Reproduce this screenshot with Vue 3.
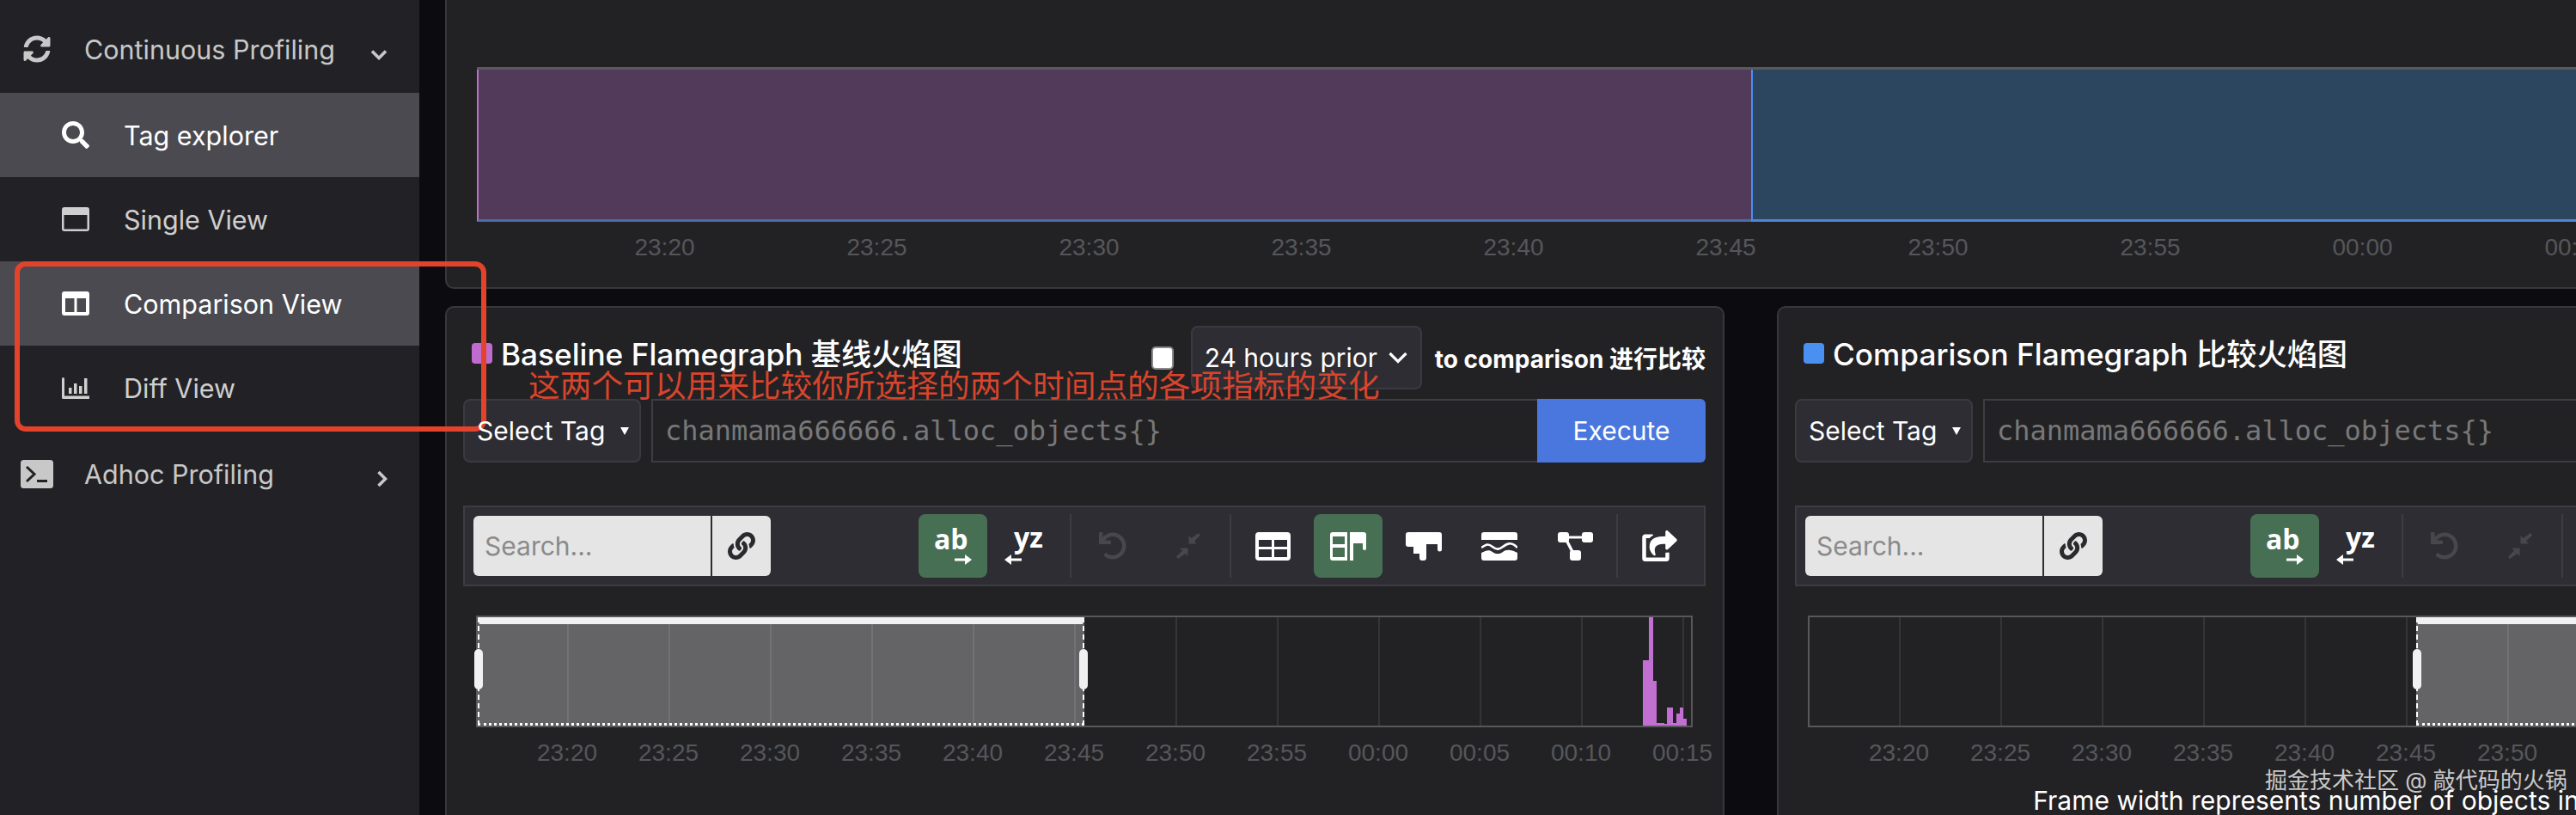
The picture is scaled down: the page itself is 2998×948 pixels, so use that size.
<script setup>
const navItems = [
  { label: 'Continuous Profiling', icon: 'sync', parent: true, caret: 'down' },
  { label: 'Tag explorer', icon: 'search', active: true },
  { label: 'Single View', icon: 'window' },
  { label: 'Comparison View', icon: 'columns', active: true },
  { label: 'Diff View', icon: 'chart' },
  { label: 'Adhoc Profiling', icon: 'terminal', parent: true, caret: 'right' },
];

const topTicks = ['23:20', '23:25', '23:30', '23:35', '23:40', '23:45', '23:50', '23:55', '00:00', '00:05'];
const ticks = ['23:20', '23:25', '23:30', '23:35', '23:40', '23:45', '23:50', '23:55', '00:00', '00:05', '00:10', '00:15'];

// x positions are measured from the inner left edge of the chart
const bars = [
  { x: 1356, w: 7, h: 76 },
  { x: 1363, w: 5, h: 126 },
  { x: 1368, w: 4, h: 52 },
  { x: 1372, w: 9, h: 3 },
  { x: 1381, w: 3, h: 2 },
  { x: 1384, w: 7, h: 21 },
  { x: 1391, w: 4, h: 3 },
  { x: 1395, w: 4, h: 14 },
  { x: 1399, w: 4, h: 21 },
  { x: 1403, w: 4, h: 8 },
];

const panels = [
  {
    title: 'Baseline Flamegraph 基线火焰图',
    color: '#c06bd0',
    selection: { left: 0, width: 706 },
    bars,
    controls: true,
    annotated: true,
  },
  {
    title: 'Comparison Flamegraph 比较火焰图',
    color: '#4a90f0',
    selection: { left: 706, width: 706 },
    bars: [],
    caption: 'Frame width represents number of objects in RAM per function',
  },
];
</script>

<template>
  <div class="page">
    <aside class="sidebar">
      <div
        v-for="item in navItems"
        :key="item.label"
        class="nav-row"
        :class="{ parent: item.parent, active: item.active }"
      >
        <span class="nav-icon">
          <svg v-if="item.icon === 'sync'" width="32" height="32" viewBox="0 0 512 512" fill="currentColor"><path d="M370.72 133.28C339.458 104.008 298.888 87.962 255.848 88c-77.458.068-144.328 53.178-162.791 126.85-1.344 5.363-6.122 9.15-11.651 9.15H24.103c-7.498 0-13.194-6.807-11.807-14.176C33.933 94.924 134.813 8 256 8c66.448 0 126.791 26.136 171.315 68.685L463.03 40.97C478.149 25.851 504 36.559 504 57.941V192c0 13.255-10.745 24-24 24H345.941c-21.382 0-32.09-25.851-16.971-40.971l41.75-41.749zM32 296h134.059c21.382 0 32.09 25.851 16.971 40.971l-41.75 41.75c31.262 29.273 71.835 45.319 114.876 45.28 77.418-.07 144.315-53.144 162.787-126.849 1.344-5.363 6.122-9.15 11.651-9.15h57.304c7.498 0 13.194 6.807 11.807 14.176C478.067 417.076 377.187 504 256 504c-66.448 0-126.791-26.136-171.315-68.685L48.97 471.03C33.851 486.149 8 475.441 8 454.059V320c0-13.255 10.745-24 24-24z"/></svg>
          <svg v-else-if="item.icon === 'search'" width="32" height="32" viewBox="0 0 512 512" fill="currentColor"><path d="M505 442.7L405.3 343c-4.5-4.5-10.6-7-17-7H372c27.6-35.3 44-79.7 44-128C416 93.1 322.9 0 208 0S0 93.1 0 208s93.1 208 208 208c48.3 0 92.7-16.4 128-44v16.3c0 6.4 2.5 12.5 7 17l99.7 99.7c9.4 9.4 24.6 9.4 33.9 0l28.3-28.3c9.4-9.4 9.4-24.6.1-34zM208 336c-70.7 0-128-57.2-128-128 0-70.7 57.2-128 128-128 70.7 0 128 57.2 128 128 0 70.7-57.2 128-128 128z"/></svg>
          <svg v-else-if="item.icon === 'window'" width="32" height="28" viewBox="0 0 32 28" fill="currentColor"><path fill-rule="evenodd" d="M3 0h26a3 3 0 0 1 3 3v22a3 3 0 0 1-3 3H3a3 3 0 0 1-3-3V3a3 3 0 0 1 3-3zM2.500 9v16.500h27V9z"/></svg>
          <svg v-else-if="item.icon === 'columns'" width="32" height="28" viewBox="0 0 32 28" fill="currentColor"><path fill-rule="evenodd" d="M3 0h26a3 3 0 0 1 3 3v22a3 3 0 0 1-3 3H3a3 3 0 0 1-3-3V3a3 3 0 0 1 3-3zM4 8v16h10.500V8zM17.500 8v16H28V8z"/></svg>
          <svg v-else-if="item.icon === 'chart'" width="32" height="25" viewBox="0 0 32 25" fill="currentColor"><path d="M0 1.500A1.500 1.500 0 0 1 3 1.500V21.500h29V25H1.500A1.500 1.500 0 0 1 0 23.500z"/><rect x="8" y="12" width="3.500" height="7"/><rect x="14" y="7" width="3.500" height="12"/><rect x="20" y="10" width="3.500" height="9"/><rect x="26" y="1" width="3.500" height="18"/></svg>
          <svg v-else width="38" height="33" viewBox="0 0 38 33"><rect width="38" height="33" rx="3.500" fill="currentColor"/><path d="M7 8l9 8.500-9 8.500" fill="none" stroke="#222226" stroke-width="3"/><rect x="19" y="23" width="12" height="3" fill="#222226"/></svg>
        </span>
        <span class="nav-label">{{ item.label }}</span>
        <svg v-if="item.caret === 'down'" class="caret" width="20" height="13" viewBox="0 0 20 13"><path d="M2 2.500l8 8 8-8" fill="none" stroke="currentColor" stroke-width="3.600"/></svg>
        <svg v-if="item.caret === 'right'" class="caret" width="13" height="20" viewBox="0 0 13 20"><path d="M2.500 2l8 8-8 8" fill="none" stroke="currentColor" stroke-width="3.600"/></svg>
      </div>
    </aside>

    <main class="main">
      <section class="card overview">
        <div class="overview-chart">
          <div class="overview-left"></div>
          <div class="overview-right"></div>
        </div>
        <div class="overview-ticks">
          <span v-for="tick in topTicks" :key="tick" class="overview-tick">{{ tick }}</span>
        </div>
      </section>

      <div class="panels">
        <section v-for="panel in panels" :key="panel.title" class="card panel">
          <div class="panel-head">
            <span class="swatch" :style="{ background: panel.color }"></span>
            <h2 class="panel-title">{{ panel.title }}</h2>
            <div v-if="panel.controls" class="compare-controls">
              <span class="checkbox"></span>
              <span class="prior-select">
                24 hours prior
                <svg width="24" height="14" viewBox="0 0 24 14"><path d="M2.500 2l9.500 9.500L21.500 2" fill="none" stroke="#fff" stroke-width="3.200"/></svg>
              </span>
              <span class="compare-label">to comparison 进行比较</span>
            </div>
          </div>

          <div class="query-row">
            <button class="tag-select">
              <span class="tag-text">Select Tag</span>
              <i class="tag-caret"></i>
            </button>
            <div class="query-input">chanmama666666.alloc_objects{}</div>
            <button class="execute">Execute</button>
          </div>

          <div class="toolbar">
            <div class="search">
              <span class="search-input">Search...</span>
              <span class="search-link">
                <svg width="32" height="32" viewBox="0 0 512 512" fill="#2a2a2e"><path d="M326.612 185.391c59.747 59.809 58.927 155.698.36 214.59-.11.12-.24.25-.36.37l-67.2 67.2c-59.27 59.27-155.699 59.262-214.96 0-59.27-59.26-59.27-155.7 0-214.96l37.106-37.106c9.84-9.84 26.786-3.3 27.294 10.606.648 17.722 3.826 35.527 9.69 52.721 1.986 5.822.567 12.262-3.783 16.612l-13.087 13.087c-28.026 28.026-28.905 73.66-1.155 101.96 28.024 28.579 74.086 28.749 102.325.51l67.2-67.19c28.191-28.191 28.073-73.757 0-101.83-3.701-3.694-7.429-6.564-10.341-8.569a16.037 16.037 0 0 1-6.947-12.606c-.396-10.567 3.348-21.456 11.698-29.806l21.054-21.055c5.521-5.521 14.182-6.199 20.584-1.731a152.482 152.482 0 0 1 20.522 17.197zM467.547 44.449c-59.261-59.262-155.69-59.27-214.96 0l-67.2 67.2c-.12.12-.25.25-.36.37-58.566 58.892-59.387 154.781.36 214.59a152.454 152.454 0 0 0 20.521 17.196c6.402 4.468 15.064 3.789 20.584-1.731l21.054-21.055c8.35-8.35 12.094-19.239 11.698-29.806a16.037 16.037 0 0 0-6.947-12.606c-2.912-2.005-6.64-4.875-10.341-8.569-28.073-28.073-28.191-73.639 0-101.83l67.2-67.19c28.239-28.239 74.3-28.069 102.325.51 27.75 28.3 26.872 73.934-1.155 101.96l-13.087 13.087c-4.35 4.35-5.769 10.79-3.783 16.612 5.864 17.194 9.042 34.999 9.69 52.721.509 13.906 17.454 20.446 27.294 10.606l37.106-37.106c59.271-59.259 59.271-155.699.001-214.959z"/></svg>
              </span>
            </div>

            <button class="tool on">
              <span class="ab-text">ab</span>
              <svg class="ab-arrow" width="20" height="12" viewBox="0 0 20 12" fill="#fff"><path d="M0 4.500h12V0l8 6-8 6V7.500H0z"/></svg>
            </button>
            <button class="tool">
              <span class="yz-text">yz</span>
              <svg class="yz-arrow" width="20" height="12" viewBox="0 0 20 12" fill="#fff"><path d="M20 4.500H8V0L0 6l8 6V7.500h12z"/></svg>
            </button>
            <span class="sep"></span>
            <button class="tool">
              <svg width="32" height="32" viewBox="0 0 512 512" fill="#47474c"><path d="M212.333 224.333H12c-6.627 0-12-5.373-12-12V12C0 5.373 5.373 0 12 0h48c6.627 0 12 5.373 12 12v78.112C117.773 39.279 184.26 7.47 258.175 8.007c136.906.994 246.448 111.623 246.157 248.532C504.041 393.258 393.12 504 256.333 504c-64.089 0-122.496-24.313-166.51-64.215-5.099-4.622-5.334-12.554-.467-17.420l33.967-33.967c4.474-4.474 11.662-4.717 16.401-.525C170.76 415.336 211.58 432 256.333 432c97.268 0 176-78.716 176-176 0-97.267-78.716-176-176-176-58.496 0-110.28 28.476-142.274 72.333h98.274c6.627 0 12 5.373 12 12v48c0 6.627-5.373 12-12 12z"/></svg>
            </button>
            <button class="tool">
              <svg width="28" height="30" viewBox="0 0 28 30" fill="#47474c"><path d="M26 0l2 2.500-7 7 3 3h-9.500V3l3 3zM2 30l-2-2.500 7-7-3-3h9.500V27l-3-3z"/></svg>
            </button>
            <span class="sep"></span>
            <button class="tool">
              <svg width="41" height="33" viewBox="0 0 41 33" fill="#fff"><path fill-rule="evenodd" d="M4 0h33a4 4 0 0 1 4 4v25a4 4 0 0 1-4 4H4a4 4 0 0 1-4-4V4a4 4 0 0 1 4-4zM4 9v8h15V9zM22 9v8h15V9zM4 20v9h15v-9zM22 20v9h15v-9z"/></svg>
            </button>
            <button class="tool on">
              <svg width="42" height="33" viewBox="0 0 42 33" fill="#fff"><path fill-rule="evenodd" d="M3 0h17v33H3a3 3 0 0 1-3-3V3a3 3 0 0 1 3-3zM3 5v9h14V5zM3 18v11h14V18z"/><path d="M23 0h16a3 3 0 0 1 3 3v16a2 2 0 0 1-4 0v-6H27v20h-4z"/></svg>
            </button>
            <button class="tool">
              <svg width="42" height="33" viewBox="0 0 42 33" fill="#fff"><path d="M3 0h36a3 3 0 0 1 3 3v17a2.500 2.500 0 0 1-5 0v-6H24v16a3 3 0 0 1-3 3h-2a3 3 0 0 1-3-3v-5H9v-8H3a3 3 0 0 1-3-3V3a3 3 0 0 1 3-3z"/></svg>
            </button>
            <button class="tool">
              <svg width="42" height="33" viewBox="0 0 42 33" fill="#fff"><path d="M3 0h36a3 3 0 0 1 3 3v6H0V3a3 3 0 0 1 3-3zM0 24c6-3 9-4 13-1s8 3 12 0 9-3 17 1v6a3 3 0 0 1-3 3H3a3 3 0 0 1-3-3z"/><path d="M0 18c6-4 8-5 13-1s8 3 12 0 9-7 17 1" fill="none" stroke="#fff" stroke-width="2.600"/></svg>
            </button>
            <button class="tool">
              <svg width="41" height="33" viewBox="0 0 41 33" fill="#fff"><rect width="13" height="12" rx="3"/><rect x="28" width="13" height="12" rx="3"/><rect x="14" y="21" width="13" height="12" rx="3"/><path d="M10 4.500h20v3H10z"/><path d="M8 9l3-1.500 7 13.500-3 1.500z"/></svg>
            </button>
            <span class="sep"></span>
            <button class="tool">
              <svg width="41" height="36" viewBox="0 0 576 512" fill="#fff"><path d="M568.482 177.448L424.479 313.433C409.3 327.768 384 317.14 384 295.985v-71.963c-144.575.97-205.566 35.113-164.775 171.353 4.483 14.973-12.846 26.567-25.006 17.33C155.252 383.105 120 326.488 120 269.339c0-143.937 117.599-172.5 264-173.312V24.012c0-21.174 25.317-31.768 40.479-17.448l144.003 136c10.02 9.463 10.028 25.425 0 34.884zM384 379.128V448H64V128h50.916a11.99 11.99 0 0 0 8.648-3.693c14.953-15.568 32.237-27.89 51.014-37.676C186.708 80.309 182.237 64 168.564 64H48C21.49 64 0 85.49 0 112v352c0 26.51 21.49 48 48 48h352c26.51 0 48-21.49 48-48v-88.806c0-8.288-8.197-14.066-16.011-11.302-10.9 3.854-22.61 4.746-35.607 2.77-6.542-1.055-12.382 4.164-12.382 10.766z"/></svg>
            </button>
          </div>

          <div class="chart">
            <span v-for="(tick, i) in ticks" :key="tick" class="grid-line" :style="{ left: 104 + i * 118 + 'px' }"></span>
            <span
              v-for="bar in panel.bars"
              :key="bar.x"
              class="bar"
              :style="{ left: bar.x + 'px', width: bar.w + 'px', height: bar.h + 'px' }"
            ></span>
            <div class="selection" :style="{ left: panel.selection.left + 'px', width: panel.selection.width + 'px' }">
              <i class="handle handle-left"></i>
              <i class="handle handle-right"></i>
            </div>
          </div>
          <div class="ticks">
            <span v-for="tick in ticks" :key="tick" class="tick">{{ tick }}</span>
          </div>
          <div v-if="panel.caption" class="caption">{{ panel.caption }}</div>

          <div v-if="panel.annotated" class="annotation">这两个可以用来比较你所选择的两个时间点的各项指标的变化</div>
        </section>
      </div>
    </main>

    <div class="red-box"></div>
    <div class="watermark">掘金技术社区 @ 敲代码的火锅</div>
  </div>
</template>

<style>
html,
body {
  background: #0c0c10;
  overflow: hidden;
}
</style>

<style scoped>
.page {
  position: relative;
  display: flex;
  width: 2998px;
  height: 948px;
  overflow: hidden;
  background: #0c0c10;
  font-family: Inter, "Noto Sans CJK SC", sans-serif;
  color: #fff;
}

button {
  border: none;
  background: none;
  padding: 0;
  color: inherit;
  font: inherit;
}

/* 사이드바 */
.sidebar {
  flex: 0 0 488px;
  padding-top: 10px;
  background: #222226;
}

.nav-row {
  display: flex;
  align-items: center;
  box-sizing: border-box;
  height: 98px;
  padding-left: 72px;
  color: #cfcfcf;
  font-size: 30.500px;
}

.nav-row.parent {
  padding-left: 23px;
  color: #c8c8c8;
}

.nav-row.parent:first-child {
  padding-bottom: 4px;
}

.nav-row.parent:last-child {
  padding-top: 4px;
}

.nav-row.active {
  background: #4a4a50;
  color: #fff;
}

.nav-icon {
  display: flex;
  align-items: center;
  justify-content: center;
  flex: 0 0 32px;
  margin-right: 40px;
}

.nav-row.parent .nav-icon {
  flex-basis: 40px;
  margin-right: 35px;
}

.caret {
  margin-left: auto;
  margin-right: 37px;
  margin-top: 12px;
}

/* 카드 */
.main {
  flex: 1;
  min-width: 0;
  padding-left: 30px;
}

.card {
  position: relative;
  box-sizing: border-box;
  border: 2px solid #38383c;
  background: #222225;
}

.overview {
  width: 2600px;
  height: 336px;
  padding: 78px 0 0 35px;
  border-top: none;
  border-right: none;
  border-bottom-left-radius: 10px;
}

.overview-chart {
  display: flex;
  height: 180px;
  border-top: 3px solid #5a5a5c;
  box-sizing: border-box;
}

.overview-left {
  flex: 0 0 1481px;
  background: #523a5a;
  border-left: 2px solid #b573c6;
  border-bottom: 3px solid #4b6ca8;
}

.overview-right {
  flex: 1;
  background: #2c4660;
  border-left: 2px solid #4a90f0;
  border-bottom: 3px solid #4d86d4;
}

.overview-ticks {
  display: flex;
  padding-left: 95px;
  margin-top: 14px;
}

.overview-tick {
  flex: 0 0 247px;
  text-align: center;
  font: 28px "Liberation Sans", sans-serif;
  color: #56565a;
}

.panels {
  display: flex;
  gap: 61px;
  margin-top: 20px;
}

.panel {
  flex: 0 0 1489px;
  min-width: 0;
  height: 640px;
  padding: 21px 20px 0 19px;
  border-radius: 10px;
}

.panel-head {
  display: flex;
  align-items: center;
  height: 74px;
  padding-left: 10px;
}

.swatch {
  flex: 0 0 24px;
  height: 24px;
  border-radius: 4px;
  margin: 0 10px 10px 0;
}

.panel-title {
  margin: 0 0 13px;
  font-size: 35.200px;
  font-weight: 500;
  white-space: nowrap;
}

.compare-controls {
  display: flex;
  align-items: center;
  margin-left: auto;
}

.checkbox {
  width: 22px;
  height: 23px;
  border: 2px solid #8a8a8a;
  border-radius: 5px;
  background: #fff;
  margin-right: 20px;
}

.prior-select {
  display: flex;
  align-items: center;
  justify-content: space-between;
  box-sizing: border-box;
  width: 269px;
  height: 74px;
  padding: 0 14px;
  margin-right: 15px;
  border: 2px solid #3a3a40;
  border-radius: 8px;
  background: #2d2d33;
  font-size: 30px;
  white-space: nowrap;
}

.compare-label {
  font-size: 28px;
  font-weight: 700;
  white-space: nowrap;
}

.query-row {
  display: flex;
  gap: 12px;
  height: 74px;
  margin-top: 11px;
}

.tag-select {
  display: flex;
  align-items: center;
  flex: 0 0 207px;
  box-sizing: border-box;
  padding-left: 14px;
  border: 2px solid #3a3a40;
  border-radius: 8px;
  background: #2d2d33;
  font-size: 30px;
}

.tag-text {
  position: relative;
  z-index: 3;
}

.tag-caret {
  margin-left: 18px;
  border: 5px solid transparent;
  border-top: 9px solid #fff;
  border-bottom: none;
}

.query-input {
  flex: 1;
  display: flex;
  align-items: center;
  box-sizing: border-box;
  padding-left: 14px;
  border: 2px solid #3d3d42;
  border-right: none;
  font: 32px "DejaVu Sans Mono", monospace;
  color: #787878;
}

.execute {
  flex: 0 0 196px;
  margin-left: -12px;
  border-radius: 0 6px 6px 0;
  background: #4a77dd;
  font-size: 30px;
}

.toolbar {
  display: flex;
  align-items: center;
  gap: 8px;
  box-sizing: border-box;
  height: 94px;
  margin-top: 50px;
  padding: 0 12px 0 10px;
  border: 2px solid #3c3c42;
  background: #2d2d33;
}

.search {
  display: flex;
  width: 346px;
  height: 70px;
  margin-right: auto;
  border-radius: 6px;
  overflow: hidden;
  background: #e5e5e5;
}

.search-input {
  display: flex;
  align-items: center;
  flex: 0 0 278px;
  box-sizing: border-box;
  padding-left: 13px;
  border-right: 2px solid #2d2d33;
  color: #8a8a8a;
  font-size: 30px;
}

.search-link {
  display: flex;
  align-items: center;
  justify-content: center;
  flex: 1;
}

.tool {
  position: relative;
  display: flex;
  align-items: center;
  justify-content: center;
  flex: 0 0 80px;
  height: 74px;
  border-radius: 8px;
}

.tool.on {
  background: #476f53;
}

.sep {
  flex: 0 0 2px;
  height: 74px;
  background: #3c3c42;
}

.ab-text,
.yz-text {
  position: absolute;
  top: 9px;
  font-family: "Open Sans", sans-serif;
  font-weight: 700;
  font-size: 32px;
  line-height: 40px;
}

.ab-text {
  left: 18px;
}

.yz-text {
  left: 23px;
  top: 7px;
}

.ab-arrow {
  position: absolute;
  left: 42px;
  top: 47px;
}

.yz-arrow {
  position: absolute;
  left: 12px;
  top: 47px;
}

.chart {
  position: relative;
  box-sizing: border-box;
  height: 130px;
  margin: 34px 15px 0;
  border: 2px solid #58585a;
}

.grid-line {
  position: absolute;
  top: 0;
  bottom: 0;
  width: 2px;
  background: rgba(255, 255, 255, 0.09);
}

.bar {
  position: absolute;
  bottom: 0;
  background: #c26fd2;
}

.selection {
  position: absolute;
  top: 0;
  bottom: 0;
  box-sizing: border-box;
  border-top: 8px solid #f1f1f1;
  border-left: 2px dashed #fff;
  border-right: 2px dashed #fff;
  border-bottom: 3px dotted #fff;
  background: rgba(255, 255, 255, 0.3);
}

.handle {
  position: absolute;
  top: 29px;
  width: 10px;
  height: 47px;
  border-radius: 5px;
  background: #f1f1f1;
}

.handle-left {
  left: -6px;
}

.handle-right {
  right: -6px;
}

.ticks {
  display: flex;
  margin: 14px 0 0 62px;
}

.tick {
  flex: 0 0 118px;
  text-align: center;
  font: 28px "Liberation Sans", sans-serif;
  color: #56565a;
}

.caption {
  margin-top: 21px;
  text-align: center;
  font-size: 30px;
  white-space: nowrap;
}

/* 주석 오버레이 */
.annotation {
  position: absolute;
  left: 95px;
  top: 66px;
  font: 36.700px/44px "Noto Sans CJK SC", sans-serif;
  color: #d9442c;
  white-space: nowrap;
}

.red-box {
  position: absolute;
  left: 17px;
  top: 304px;
  width: 549px;
  height: 198px;
  box-sizing: border-box;
  border: 6px solid #e4432b;
  border-radius: 13px;
  pointer-events: none;
}

.watermark {
  position: absolute;
  left: 2636px;
  top: 892px;
  font-size: 26px;
  line-height: 32px;
  color: #c8c8c8;
  white-space: nowrap;
}
</style>
